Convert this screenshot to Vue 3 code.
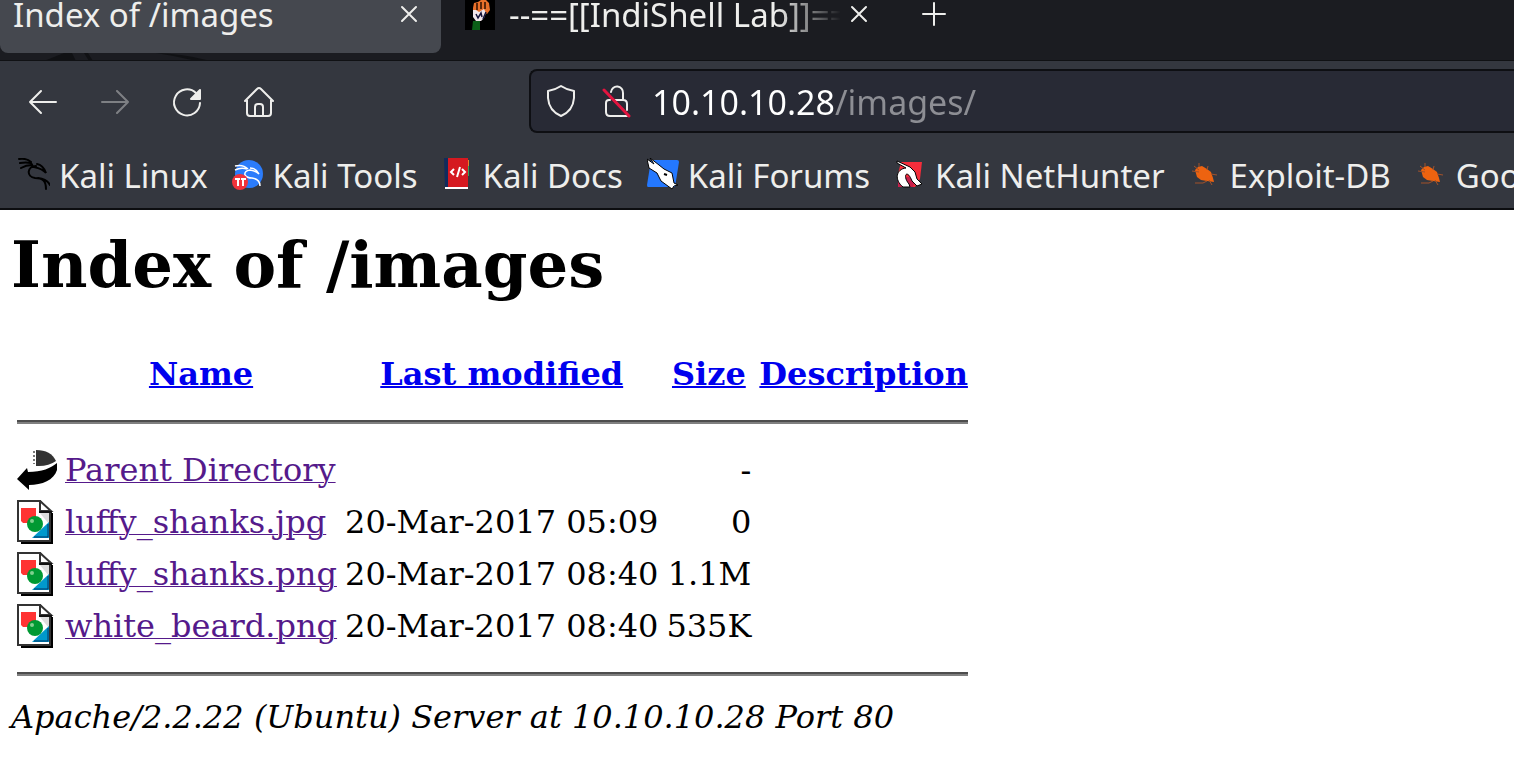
<script setup>
import { ref } from 'vue'

const address = ref('10.10.10.28/images/')
const bookmarks = [
  { icon: 'dragon', label: 'Kali Linux' },
  { icon: 'tools', label: 'Kali Tools' },
  { icon: 'docs', label: 'Kali Docs' },
  { icon: 'forums', label: 'Kali Forums' },
  { icon: 'nethunter', label: 'Kali NetHunter' },
  { icon: 'bug', label: 'Exploit-DB' },
  { icon: 'bug', label: 'Google Hacking DB' },
]
const columns = ['Name', 'Last modified', 'Size', 'Description']
const files = [
  { icon: 'back', name: 'Parent Directory', modified: '', size: '-' },
  { icon: 'image', name: 'luffy_shanks.jpg', modified: '20-Mar-2017 05:09', size: '0' },
  { icon: 'image', name: 'luffy_shanks.png', modified: '20-Mar-2017 08:40', size: '1.1M' },
  { icon: 'image', name: 'white_beard.png', modified: '20-Mar-2017 08:40', size: '535K' },
]
</script>

<template>
  <div class="browser">
    <div class="tabs">
      <svg class="theme-art" width="230" height="60" viewBox="0 0 230 60" aria-hidden="true">
        <path fill="#101114" d="M44 61 64 53h8l4 8zM84 53h4l5 8h-4zM156 53q30 1 54 8h-14q-20-5-40-8" />
      </svg>
      <div class="tab active">
        <span class="tab-title">Index of /images</span>
        <button class="close" aria-label="Close tab">
          <svg width="18" height="18" viewBox="0 0 18 18"><path d="M2 2 16 16M16 2 2 16" /></svg>
        </button>
      </div>
      <div class="tab">
        <svg class="favicon" width="30" height="30" viewBox="0 0 30 30">
          <path fill="#000" d="M0 0h30v30H0z" />
          <path fill="#e8702a" d="M8 8 9 3l4-1 3-2h5l3 3 1 7-3 4-4-3-6 2-4-2z" />
          <path fill="#f1e6ea" d="M8 10h3l3 2 5-3 2 4-2 5-3 3h-5l-3-4z" />
          <path fill="#0b5f18" d="M8 21h7v9H7z" />
          <path stroke="#2e0f00" fill="none" stroke-width="1.500" d="M12 3v7M16 2v7M20 2v7" />
          <path stroke="#14143a" fill="none" stroke-width="1.500" d="m11 14 2 4 3-5 1 4M21 12l-3 7" />
        </svg>
        <span class="tab-title faded">--==[[IndiShell Lab]]==--</span>
        <button class="close" aria-label="Close tab">
          <svg width="18" height="18" viewBox="0 0 18 18"><path d="M2 2 16 16M16 2 2 16" /></svg>
        </button>
      </div>
      <button class="new-tab" aria-label="New tab">
        <svg width="24" height="24" viewBox="0 0 24 24"><path d="M12 1v22M1 12h22" /></svg>
      </button>
    </div>

    <div class="toolbar">
      <nav class="nav" aria-label="Navigation">
        <button aria-label="Back"><svg width="32" height="32" viewBox="0 0 32 32"><path d="M29 16H3M14 5 3 16l11 11" /></svg></button>
        <button aria-label="Forward" disabled><svg width="32" height="32" viewBox="0 0 32 32"><path d="M3 16h26M18 5l11 11-11 11" /></svg></button>
        <button aria-label="Reload"><svg width="32" height="32" viewBox="0 0 32 32"><path d="M29 17a13 13 0 1 1-4-10" /><path class="solid" d="M29 4v9h-9z" /></svg></button>
        <button aria-label="Home"><svg width="32" height="32" viewBox="0 0 32 32"><path d="M2 15 14 3q2-2 4 0l12 12M4 14v13q0 3 3 3h18q3 0 3-3V14M12 29v-8q0-3 3-3h2q3 0 3 3v8" /></svg></button>
      </nav>
      <div class="address-bar">
        <button aria-label="Tracking protection"><svg width="32" height="34" viewBox="0 0 32 34"><path d="M16 2q6 4 13 5v7q-1 13-13 18Q4 27 3 14V7q7-1 13-5z" /></svg></button>
        <button aria-label="Connection not secure"><svg width="32" height="34" viewBox="0 0 32 34"><path d="M10 8a6 6 0 0 1 12 1v7M9 16H8q-3 0-3 3v9q0 4 4 4h17M14 16h8q4 0 4 4v6" /><path class="slash" d="m3 6 25 26" /></svg></button>
        <input v-model="address" type="text" aria-label="Address" spellcheck="false">
      </div>
    </div>

    <nav class="bookmarks" aria-label="Bookmarks">
      <a v-for="(b, i) in bookmarks" :key="i" href="#">
        <span class="slot">
          <svg v-if="b.icon === 'dragon'" width="32" height="32" viewBox="0 0 32 32" fill="none" stroke="#000" stroke-linecap="round" stroke-width="2"><path d="M1 1q8-1 12 3M2 5q6-1 11 0M3 10q5-3 11-3M12 4q2 2 3 5M19 6q6 1 9 9-3-4-12-6M18 8c-9 0-10 11-1 12 8 0 11 3 11 11M20 20q9 1 12 7" /></svg>
          <svg v-else-if="b.icon === 'tools'" width="32" height="32" viewBox="0 0 32 32"><circle cx="17" cy="16" r="14" fill="#2b7cfb" /><path d="M3 8q8-2 13 3M3 12q6-3 12-1M18 10q6 0 9 6-3-3-9-4-6 1-5 5 2 3 7 3 8 1 8 8" fill="none" stroke="#fff" stroke-width="1.500" /><circle cx="8" cy="24" r="8" fill="#f2333b" /><path d="M3 21h5M9 21h5M6 20v8M11 20v8" stroke="#fff" stroke-width="2" /></svg>
          <svg v-else-if="b.icon === 'docs'" width="26" height="32" viewBox="0 0 26 32"><path fill="#d51920" d="M4 0h20v29H4z" /><path fill="#e8842b" d="M24 2h1v6h-1z" /><path fill="#35a05a" d="M24 8h1v10h-1z" /><path fill="#112b5c" d="M0 0h4v31H1z" /><path fill="#fff" d="M1 29h23v2H1z" /><path d="m10 11-3 3 3 3m8-6 3 3-3 3m-2-8-3 10" fill="none" stroke="#fff" stroke-width="2" /></svg>
          <svg v-else-if="b.icon === 'forums'" width="32" height="32" viewBox="0 0 32 32"><path fill="#2478ff" d="M4 2h26q2 0 2 2l-4 25H1q-1 0-1-2z" /><path fill="#fff" stroke="#000" d="m0 1 2 9 8 5 4 8 11 8 2-3 4-1-4-2-2-10-8-4-5-4L3 0l4 6z" /><path d="m17 16 3 1" stroke="#000" stroke-width="2" /></svg>
          <svg v-else-if="b.icon === 'nethunter'" width="28" height="28" viewBox="0 0 28 28"><path fill="#f52d3b" d="M5 2h21l-2 17-5 8H2V14z" /><path fill="#c5204b" d="M2 17h18l-3 10H2z" /><path fill="#fff" stroke="#000" d="M1 1 14 7l5 5 2 7 5 5-5 2-5-5c-5-13-10-5-3 3l1 3H7C-2 20 0 9 10 8L1 3z" /></svg>
          <svg v-else width="28" height="26" viewBox="0 0 28 26"><path fill="#ed6310" d="M4 9 7 6l4-1 5 3 4 3 2 6 1 4-7-1-6-1-4-3z" /><path stroke="#a2522b" d="M8 6V2M3 5l5 4M1 10l7 1M16 9l1-4M20 13l6 1M4 22h8l4-2M18 19l3 5" fill="none" /></svg>
        </span>
        <span>{{ b.label }}</span>
      </a>
    </nav>
  </div>

  <main>
    <h1>Index of /images</h1>
    <table>
      <thead>
        <tr>
          <td class="icon"></td>
          <th v-for="c in columns" :key="c"><a href="#">{{ c }}</a></th>
        </tr>
        <tr><td colspan="5"><hr></td></tr>
      </thead>
      <tbody>
        <tr v-for="f in files" :key="f.name">
          <td class="icon">
            <svg v-if="f.icon === 'back'" width="40" height="44" viewBox="0 0 40 44"><path fill="#333" d="M19 2q15 0 20 11-7 5-17 5h-3z" /><path d="M17 3v13" stroke="#777" stroke-width="2" stroke-dasharray="2 2" /><path fill="#000" d="M0 31 10 20l1 4c14 0 23-4 29-9v7c-3 10-15 15-28 15v5z" /></svg>
            <svg v-else width="40" height="44" viewBox="0 0 40 44"><path fill="#000" d="M4 13h32v31H4z" /><path fill="#fff" stroke="#333" stroke-width="2" d="M1 1h22l10 11v29H1z" /><path fill="#ddd" d="M22 12h10v12z" /><path fill="#fff" stroke="#333" stroke-width="2" d="M23 1v10h11z" /><path stroke="#111" stroke-width="2" d="M22 12h13" /><path fill="#ff3333" d="M4 8h15v15H6l-2-2z" /><path fill="#0099cc" d="M32 22v16H15z" /><path fill="none" stroke="#036" stroke-width="1" d="M31 24v13H17" /><circle cx="18" cy="24" r="8" fill="#009933" /><circle cx="15" cy="21" r="2" fill="#7fd08f" /></svg>
          </td>
          <td><a class="visited" href="#">{{ f.name }}</a></td>
          <td class="right">{{ f.modified }}</td>
          <td class="right">{{ f.size }}</td>
          <td></td>
        </tr>
      </tbody>
      <tfoot><tr><td colspan="5"><hr></td></tr></tfoot>
    </table>
    <address>Apache/2.2.22 (Ubuntu) Server at 10.10.10.28 Port 80</address>
  </main>
</template>

<style>
body { background: #fff; }
</style>

<style scoped>
.browser {
  font: 33px/40px "Noto Sans", sans-serif;
  color: #eeeeec;
  background: #34373f;
  border-bottom: 2px solid #0c0d10;
  overflow: hidden;
}
button { border: 0; padding: 0; background: none; color: inherit; display: flex; }
svg { flex: none; display: block; }

.tabs {
  position: relative;
  display: flex;
  align-items: flex-start;
  height: 60px;
  background: #1b1c21;
  border-bottom: 1px solid #101114;
}
.theme-art { position: absolute; left: 0; top: 0; }
.tab {
  position: relative;
  display: flex;
  align-items: flex-start;
  gap: 14px;
  width: 450px;
  height: 53px;
  box-sizing: border-box;
  padding: 0 23px 0 24px;
  line-height: 30px;
}
.tab.active {
  width: 441px;
  padding-left: 13px;
  background: #45484f;
  border-radius: 0 0 8px 8px;
}
.tab-title { flex: 1; min-width: 0; white-space: nowrap; line-height: 30px; }
.faded {
  height: 40px;
  overflow: hidden;
  -webkit-mask-image: linear-gradient(to right, #000 80%, transparent 99%);
  mask-image: linear-gradient(to right, #000 80%, transparent 99%);
}
.close { height: 28px; align-items: center; }
.faded + .close { margin-left: -8px; }
.new-tab { height: 28px; align-items: center; margin-left: 31px; }
.close path, .new-tab path, .nav path, .address-bar path {
  fill: none;
  stroke: #eeeeec;
  stroke-width: 2;
  stroke-linecap: round;
  stroke-linejoin: round;
}

.toolbar { display: flex; align-items: center; padding: 8px 0 8px 27px; }
.nav { display: flex; gap: 40px; margin-right: 254px; padding-top: 2px; }
.nav button:disabled { opacity: 0.4; }
.nav path.solid { fill: #eeeeec; }
.address-bar {
  flex: 1;
  min-width: 0;
  display: flex;
  align-items: center;
  gap: 24px;
  padding-left: 14px;
  background: #282a35;
  border: 2px solid #0e0f13;
  border-right: 0;
  border-radius: 8px 0 0 8px;
}
.address-bar path.slash { stroke: #e2143f; stroke-width: 3; }
.address-bar input {
  flex: 1;
  min-width: 0;
  height: 60px;
  box-sizing: border-box;
  margin-left: -5px;
  padding: 2px 0 0;
  border: 0;
  outline: 0;
  font: 34px/58px "Noto Sans", sans-serif;
  color: transparent;
  caret-color: #fff;
  background: linear-gradient(to right, #fff 183px, #8d8e94 183px);
  -webkit-background-clip: text;
  background-clip: text;
}

.bookmarks { display: flex; gap: 24px; padding: 15px 0 12px 18px; }
.bookmarks a { display: flex; flex: none; align-items: center; gap: 9px; color: inherit; text-decoration: none; white-space: nowrap; }
.slot { width: 32px; height: 32px; margin-bottom: 4px; display: grid; place-items: center; }

main { padding: 17px 11px; font: 32px "DejaVu Serif", serif; color: #000; }
h1 { margin: 0 0 44px; font-size: 64px; line-height: 75px; }
table { border-spacing: 4px; }
td, th { padding: 2px; white-space: nowrap; }
.icon { width: 40px; height: 44px; }
.right { text-align: right; }
main a { color: #0000ee; text-decoration-thickness: 1px; }
main th a { text-decoration-thickness: 2px; }
main a.visited { color: #551a8b; }
hr { margin: 16px 0; border: solid; border-width: 2px 0; border-color: #4d4d4d #808080 #808080 #4d4d4d; }
</style>
